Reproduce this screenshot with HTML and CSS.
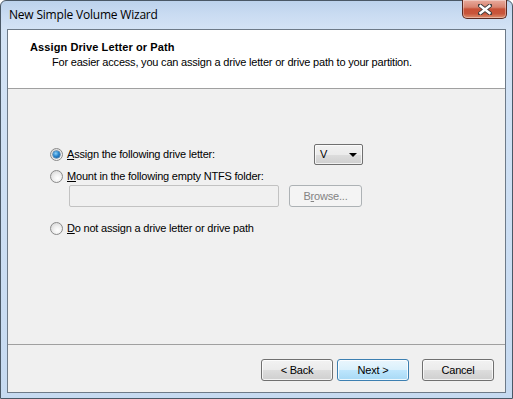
FILE: index.html
```html
<!DOCTYPE html>
<html>
<head>
<meta charset="utf-8">
<link rel="stylesheet" href="styles.css">
</head>
<body>
<div class="window">
  <div class="titlebar">
    <span class="title">New Simple Volume Wizard</span>
    <button class="close" aria-label="Close">
      <svg width="14" height="11" viewBox="0 0 14 11">
        <path d="M2 1.5 L12 9.5 M12 1.5 L2 9.5" stroke="#3b3b3b" stroke-width="4.2" stroke-linecap="square"/>
        <path d="M2.5 2 L11.5 9 M11.5 2 L2.5 9" stroke="#ffffff" stroke-width="2.4" stroke-linecap="square"/>
      </svg>
    </button>
  </div>
  <div class="client">
    <div class="header">
      <div class="h-title">Assign Drive Letter or Path</div>
      <div class="h-sub">For easier access, you can assign a drive letter or drive path to your partition.</div>
    </div>
    <div class="body">
      <div class="row row1">
        <label class="opt"><span class="radio checked"></span><span class="lbl"><u>A</u>ssign the following drive letter:</span></label>
        <div class="combo"><span class="combo-val">V</span><span class="arrow"></span></div>
      </div>
      <div class="row row2">
        <label class="opt"><span class="radio"></span><span><u>M</u>ount in the following empty NTFS folder:</span></label>
      </div>
      <div class="row row-field">
        <div class="field"></div>
        <div class="btn disabled browse">B<u>r</u>owse...</div>
      </div>
      <div class="row row3">
        <label class="opt"><span class="radio"></span><span><u>D</u>o not assign a drive letter or drive path</span></label>
      </div>
    </div>
    <div class="footer">
      <div class="btn">&lt; Back</div>
      <div class="btn default">Next &gt;</div>
      <div class="btn cancel">Cancel</div>
    </div>
  </div>
</div>
</body>
</html>
```

FILE: styles.css
```css
* { box-sizing: border-box; }
html, body { margin: 0; padding: 0; }
body {
  width: 513px;
  height: 399px;
  overflow: hidden;
  background: #ffffff;
  font-family: "Liberation Sans", Arial, sans-serif;
  font-size: 11px;
  letter-spacing: -0.2px;
  color: #000;
}
.window {
  width: 513px;
  height: 399px;
  border: 1px solid #4a5866;
  border-radius: 6px 6px 0 0;
  background: linear-gradient(to bottom, #bcd2ec 0px, #cadcf2 14px, #d3e3f5 28px, #c6daf1 100%);
  padding: 0 6px 5px 6px;
  display: flex;
  flex-direction: column;
}
.titlebar {
  height: 28px;
  display: flex;
  align-items: flex-start;
  justify-content: space-between;
  flex: none;
}
.title {
  font-family: "Open Sans", "Noto Sans", sans-serif;
  font-size: 12px;
  padding-left: 2px;
  padding-top: 5px;
  color: #000;
  letter-spacing: -0.2px;
}
.close {
  width: 45px;
  height: 19px;
  margin: -1px -1px 0 0;
  border: 1px solid #5a2a22;
  border-top: none;
  border-radius: 0 0 5px 5px;
  background: linear-gradient(to bottom, #e9ab9d 0%, #d88470 40%, #c85137 50%, #c8553b 75%, #dd8f6f 100%);
  box-shadow: inset 0 0 0 1px rgba(255,255,255,0.35);
  padding: 0;
  display: flex;
  align-items: center;
  justify-content: center;
}
.client {
  flex: 1;
  border: 1px solid #6d7a88;
  background: #f0f0f0;
  display: flex;
  flex-direction: column;
}
.header {
  height: 59px;
  background: #ffffff;
  border-bottom: 1px solid #a0a0a0;
  flex: none;
  padding: 10px 0 0 22px;
}
.h-title {
  font-weight: bold;
  line-height: 14px;
  letter-spacing: 0.1px;
}
.h-sub {
  padding-left: 22px;
  margin-top: 1px;
  line-height: 14px;
}
.body {
  flex: 1;
  border-bottom: 1px solid #a0a0a0;
  padding-top: 55px;
  padding-left: 42px;
}
.row { display: flex; align-items: center; }
.opt { display: flex; align-items: center; gap: 4px; }
.opt u, .browse u { text-decoration-thickness: 1px; text-underline-offset: 1px; }
.radio {
  width: 13px;
  height: 13px;
  border-radius: 50%;
  border: 1px solid #8a8a8a;
  background: radial-gradient(circle at 60% 65%, #ffffff 0%, #f0f0f0 40%, #cfcfcf 100%);
  position: relative;
  flex: none;
}
.radio.checked::after {
  content: "";
  position: absolute;
  left: 2px; top: 2px;
  width: 7px; height: 7px;
  border-radius: 50%;
  background: radial-gradient(circle at 40% 35%, #8fd1f7 0%, #2a87cf 45%, #0c4d8d 100%);
  box-shadow: 0 0 0 0.5px #1c5180;
}
.row1 { height: 20px; }
.lbl { width: 247px; }
.combo {
  width: 49px;
  height: 21px;
  border: 1px solid #707070;
  border-radius: 2px;
  background: linear-gradient(to bottom, #f2f2f2 0%, #ebebeb 50%, #dddddd 51%, #cfcfcf 100%);
  box-shadow: inset 0 0 0 1px rgba(255,255,255,0.7);
  display: flex;
  align-items: center;
  justify-content: space-between;
  padding: 0 5px 0 5px;
}
.combo-val { line-height: 14px; }
.arrow {
  width: 0; height: 0;
  border-left: 4px solid transparent;
  border-right: 4px solid transparent;
  border-top: 4px solid #000;
  margin-top: 1px;
}
.row2 { margin-top: 3px; height: 18px; }
.row-field { margin-top: 0; padding-left: 19px; gap: 10px; }
.field {
  width: 210px;
  height: 22px;
  border: 1px solid #c2c2c2;
  border-radius: 2px;
  background: #f0f0f0;
}
.btn {
  width: 72px;
  height: 22px;
  border: 1px solid #707070;
  border-radius: 3px;
  background: linear-gradient(to bottom, #f2f2f2 0%, #ebebeb 50%, #dddddd 51%, #cfcfcf 100%);
  box-shadow: inset 0 0 0 1px rgba(255,255,255,0.75);
  display: flex;
  align-items: center;
  justify-content: center;
  line-height: 14px;
}
.btn.disabled {
  border-color: #adb2b5;
  background: #f4f4f4;
  box-shadow: none;
  color: #838383;
}
.browse { width: 73px; }
.row3 { margin-top: 11px; height: 20px; }
.footer {
  height: 47px;
  flex: none;
  display: flex;
  align-items: flex-start;
  justify-content: flex-end;
  padding: 14px 11px 0 0;
  gap: 4px;
}
.btn.default {
  border-color: #3c7fb1;
  background: linear-gradient(to bottom, #eaf6fd 0%, #d9f0fc 50%, #bee6fd 51%, #a7d9f5 100%);
  box-shadow: inset 0 0 0 1px rgba(255,255,255,0.8);
}
.btn.cancel { margin-left: 9px; }
```
